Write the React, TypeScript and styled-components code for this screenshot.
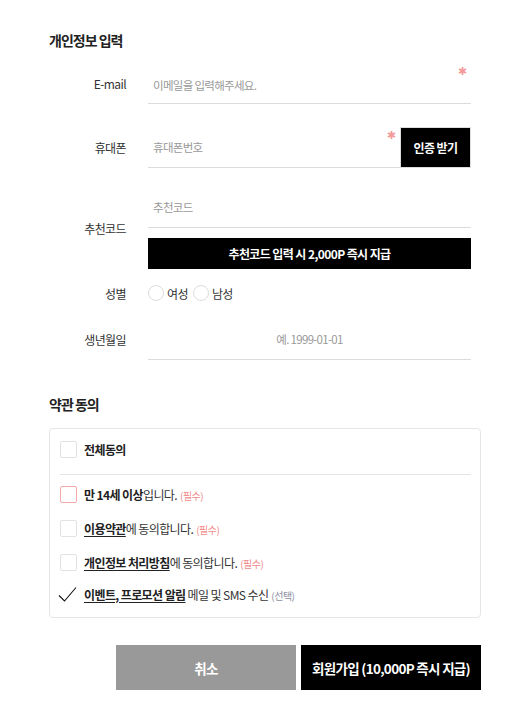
import styled, { createGlobalStyle } from "styled-components";

const GlobalStyle = createGlobalStyle`
  html, body {
    margin: 0;
    padding: 0;
    background: #fff;
  }
  body {
    font-family: "Noto Sans CJK KR", "Noto Sans", sans-serif;
    color: #333;
  }
`;

const Page = styled.div`
  width: 432px;
  padding: 30px 0 23px 49px;
  display: flex;
  flex-direction: column;
`;

const SectionTitle = styled.h3<{ $mt?: number }>`
  margin: ${(p) => p.$mt || 0}px 0 0;
  font-size: 14px;
  font-weight: 700;
  letter-spacing: -1px;
  color: #222;
  line-height: 20px;
`;

const Form = styled.div`
  display: flex;
  flex-direction: column;
  width: 422px;
  margin-top: 12px;
`;

const Row = styled.div<{ $mt: number }>`
  display: grid;
  grid-template-columns: 77px 323px;
  column-gap: 22px;
  align-items: center;
  margin-top: ${(p) => p.$mt}px;
`;

const Label = styled.div`
  text-align: right;
  font-size: 12px;
  letter-spacing: -0.6px;
  color: #333;
`;

const FieldWrap = styled.div`
  display: flex;
  flex-direction: column;
  gap: 10px;
`;

const InputLine = styled.div`
  display: flex;
  align-items: stretch;
`;

const InputBox = styled.div<{ $h?: number; $pt?: number }>`
  position: relative;
  flex: 1 0 auto;
  min-width: 0;
  height: ${(p) => p.$h || 41}px;
  padding-top: ${(p) => p.$pt || 0}px;
  box-sizing: border-box;
  border-bottom: 1px solid #dcdcdc;
  display: flex;
  align-items: center;
`;

const Input = styled.input<{ $center?: boolean }>`
  width: 100%;
  border: 0;
  outline: none;
  background: transparent;
  padding: 0 5px;
  font-family: "Noto Sans CJK KR", sans-serif;
  font-size: 11.5px;
  letter-spacing: -0.7px;
  color: #333;
  text-align: ${(p) => (p.$center ? "center" : "left")};
  &::placeholder {
    color: #999;
  }
`;

const Required = styled.span<{ $top: number }>`
  position: absolute;
  right: 4px;
  top: ${(p) => p.$top}px;
  color: #f39a9a;
  font-family: "DejaVu Sans", sans-serif;
  font-size: 11px;
  line-height: 1;
`;

const AuthButton = styled.button`
  width: 71px;
  height: 41px;
  border: 1px solid #ddd;
  background: #000;
  color: #fff;
  font-family: "Noto Sans CJK KR", sans-serif;
  font-size: 12px;
  font-weight: 700;
  letter-spacing: -0.6px;
  padding: 0;
`;

const PromoBar = styled.div`
  height: 31px;
  background: #000;
  color: #fff;
  display: flex;
  align-items: center;
  justify-content: center;
  font-size: 12px;
  font-weight: 700;
  letter-spacing: -0.6px;
`;

const RadioGroup = styled.div`
  display: flex;
  align-items: center;
  gap: 5px;
  height: 18px;
`;

const RadioOption = styled.label`
  display: flex;
  align-items: center;
  gap: 3px;
  font-size: 12px;
  letter-spacing: -0.6px;
  color: #333;
`;

const Circle = styled.span`
  width: 16px;
  height: 16px;
  border-radius: 50%;
  border: 1px solid #ddd;
  box-sizing: border-box;
`;

const TermsBox = styled.div`
  margin-top: 14px;
  border: 1px solid #e6e6e6;
  border-radius: 4px;
  padding: 11px 9px 14px 10px;
  display: flex;
  flex-direction: column;
`;

const TermRow = styled.div<{ $mt?: number }>`
  display: flex;
  align-items: center;
  gap: 7px;
  height: 18px;
  margin-top: ${(p) => p.$mt || 0}px;
  font-size: 12px;
  letter-spacing: -0.6px;
  color: #333;
`;

const Check = styled.span<{ $alert?: boolean }>`
  width: 17px;
  height: 17px;
  box-sizing: border-box;
  border: 1px solid ${(p) => (p.$alert ? "#f5a9a9" : "#e2e2e2")};
  border-radius: 2px;
  flex-shrink: 0;
`;

const Divider = styled.div`
  height: 1px;
  background: #e4e4e4;
  margin-top: 16px;
`;

const Strong = styled.b<{ $u?: boolean }>`
  font-weight: 700;
  color: #222;
  text-decoration: ${(p) => (p.$u ? "underline" : "none")};
  text-underline-offset: 2px;
`;

const Tag = styled.span<{ $opt?: boolean }>`
  margin-left: 3px;
  font-size: 10px;
  letter-spacing: -0.5px;
  color: ${(p) => (p.$opt ? "#8a8fa3" : "#f28b8b")};
`;

const Actions = styled.div`
  display: flex;
  justify-content: flex-end;
  gap: 5px;
  margin-top: 27px;
`;

const ActionButton = styled.button<{ $dark?: boolean }>`
  width: 180px;
  height: 45px;
  border: 0;
  padding: 0;
  background: ${(p) => (p.$dark ? "#000" : "#999")};
  color: #fff;
  font-family: "Noto Sans CJK KR", sans-serif;
  font-size: 13.5px;
  font-weight: 700;
  letter-spacing: -0.7px;
`;

const CheckMark = () => (
  <svg width="19" height="17" viewBox="0 0 19 17" style={{ flexShrink: 0, marginLeft: -2 }}>
    <polyline points="1,9.5 6.5,15 18,1.5" fill="none" stroke="#111" strokeWidth="1.1" />
  </svg>
);

export default function App() {
  return (
    <>
      <GlobalStyle />
      <Page>
        <SectionTitle>개인정보 입력</SectionTitle>
        <Form>
          <Row $mt={0}>
            <Label>E-mail</Label>
            <InputBox $h={42} $pt={4}>
              <Input placeholder="이메일을 입력해주세요." />
              <Required $top={4}>✱</Required>
            </InputBox>
          </Row>
          <Row $mt={23}>
            <Label>휴대폰</Label>
            <InputLine>
              <InputBox>
                <Input placeholder="휴대폰번호" />
                <Required $top={3}>✱</Required>
              </InputBox>
              <AuthButton>인증 받기</AuthButton>
            </InputLine>
          </Row>
          <Row $mt={19}>
            <Label>추천코드</Label>
            <FieldWrap>
              <InputBox>
                <Input placeholder="추천코드" />
              </InputBox>
              <PromoBar>추천코드 입력 시 2,000P 즉시 지급</PromoBar>
            </FieldWrap>
          </Row>
          <Row $mt={15}>
            <Label>성별</Label>
            <RadioGroup>
              <RadioOption>
                <Circle />
                여성
              </RadioOption>
              <RadioOption>
                <Circle />
                남성
              </RadioOption>
            </RadioGroup>
          </Row>
          <Row $mt={17}>
            <Label>생년월일</Label>
            <InputBox>
              <Input $center placeholder="예. 1999-01-01" />
            </InputBox>
          </Row>
        </Form>

        <SectionTitle $mt={34}>약관 동의</SectionTitle>
        <TermsBox>
          <TermRow>
            <Check />
            <Strong>전체동의</Strong>
          </TermRow>
          <Divider />
          <TermRow $mt={10}>
            <Check $alert />
            <span>
              <Strong>만 14세 이상</Strong>입니다.<Tag>(필수)</Tag>
            </span>
          </TermRow>
          <TermRow $mt={16}>
            <Check />
            <span>
              <Strong $u>이용약관</Strong>에 동의합니다.<Tag>(필수)</Tag>
            </span>
          </TermRow>
          <TermRow $mt={16}>
            <Check />
            <span>
              <Strong $u>개인정보 처리방침</Strong>에 동의합니다.<Tag>(필수)</Tag>
            </span>
          </TermRow>
          <TermRow $mt={14}>
            <CheckMark />
            <span>
              <Strong $u>이벤트, 프로모션 알림</Strong> 메일 및 SMS 수신<Tag $opt>(선택)</Tag>
            </span>
          </TermRow>
        </TermsBox>

        <Actions>
          <ActionButton>취소</ActionButton>
          <ActionButton $dark>회원가입 (10,000P 즉시 지급)</ActionButton>
        </Actions>
      </Page>
    </>
  );
}
